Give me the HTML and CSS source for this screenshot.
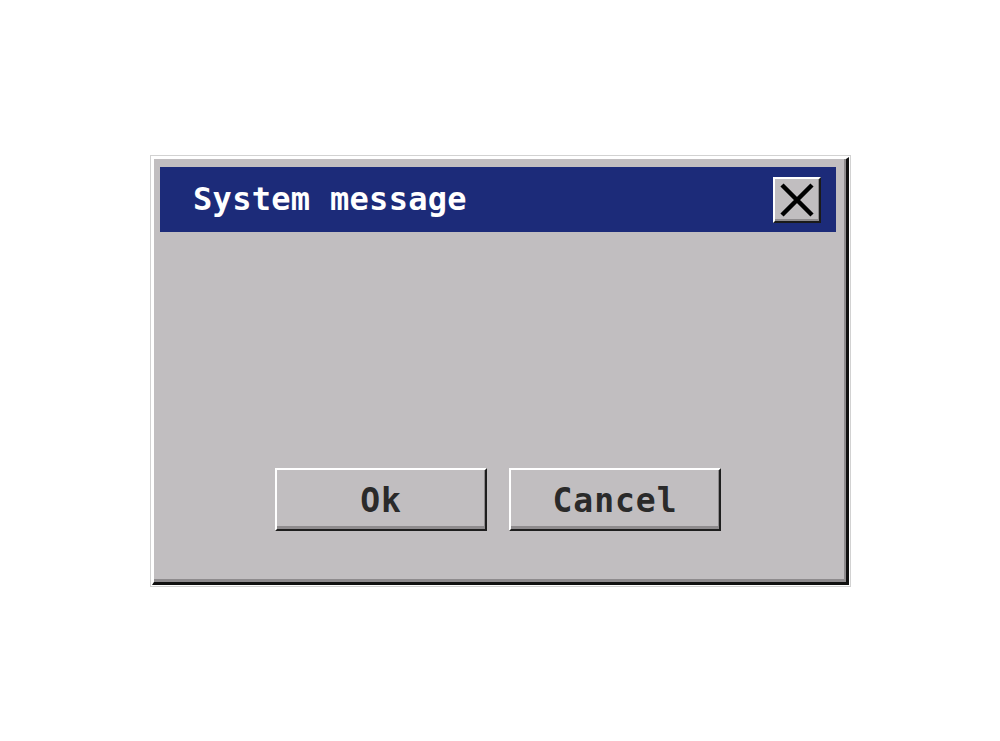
FILE: index.html
```html
<!DOCTYPE html>
<html>
<head>
<meta charset="utf-8">
<link rel="stylesheet" href="styles.css">
</head>
<body>
<div class="page">
  <div class="frame">
    <div class="window">
      <div class="titlebar">
        <span class="title">System message</span>
        <div class="close">
          <svg width="44" height="42" viewBox="0 0 44 42">
            <path d="M7 6 L37 36 M37 6 L7 36" stroke="#000" stroke-width="4.5" stroke-linecap="butt" fill="none"/>
          </svg>
        </div>
      </div>
      <div class="buttons">
        <div class="btn">Ok</div>
        <div class="btn">Cancel</div>
      </div>
    </div>
  </div>
</div>
</body>
</html>
```
FILE: styles.css
```css
html, body {
  margin: 0;
  padding: 0;
  background: #ffffff;
}
.page {
  width: 1000px;
  height: 741px;
  padding: 155px 0 0 150px;
  box-sizing: border-box;
}
.frame {
  width: 701px;
  height: 432px;
  box-sizing: border-box;
  border: 1px solid #d2d2d2;
  padding: 1px;
  background: #ffffff;
}
.window {
  width: 697px;
  height: 428px;
  box-sizing: border-box;
  background: #c1bec0;
  border-top: 2px solid #ffffff;
  border-left: 2px solid #ffffff;
  border-right: 3px solid #111111;
  border-bottom: 3px solid #111111;
  box-shadow: inset -2px -3px 0 #8e8b8d;
  padding: 8px 10px 0 6px;
  display: flex;
  flex-direction: column;
}
.titlebar {
  height: 65px;
  background: #1c2b79;
  display: flex;
  align-items: center;
  justify-content: space-between;
  padding: 0 15px 0 33px;
  box-sizing: border-box;
}
.title {
  font-family: "DejaVu Sans Mono", "Liberation Mono", monospace;
  font-weight: bold;
  font-size: 32px;
  letter-spacing: 0.3px;
  color: #ffffff;
  line-height: 1;
  margin-top: -1px;
}
.close {
  width: 48px;
  height: 46px;
  box-sizing: border-box;
  background: #c1bec0;
  border-top: 2px solid #ffffff;
  border-left: 2px solid #ffffff;
  border-right: 2px solid #1a1a1a;
  border-bottom: 2px solid #1a1a1a;
  box-shadow: inset -1px -2px 0 #8e8b8d;
  display: flex;
  align-items: center;
  justify-content: center;
  margin-top: 1px;
}
.close svg {
  display: block;
}
.buttons {
  display: flex;
  justify-content: center;
  gap: 22px;
  margin-top: 236px;
}
.btn {
  width: 212px;
  height: 63px;
  box-sizing: border-box;
  background: #c1bec0;
  border-top: 2px solid #ffffff;
  border-left: 2px solid #ffffff;
  border-right: 2px solid #1e1e1e;
  border-bottom: 2px solid #1e1e1e;
  box-shadow: inset -1px -3px 0 #8e8b8d;
  display: flex;
  align-items: center;
  justify-content: center;
  font-family: "DejaVu Sans Mono", "Liberation Mono", monospace;
  font-weight: bold;
  font-size: 33px;
  letter-spacing: 1px;
  color: #2a2a2a;
  line-height: 1;
  padding-top: 2px;
}
```
